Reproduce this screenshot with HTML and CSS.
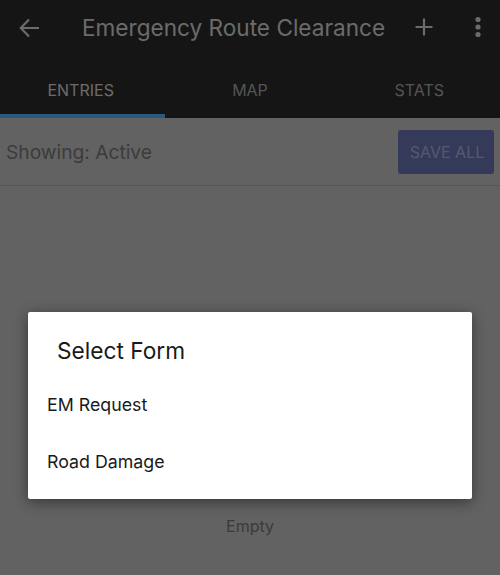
FILE: index.html
```html
<!DOCTYPE html>
<html>
<head>
<meta charset="utf-8">
<link rel="stylesheet" href="styles.css">
</head>
<body>
<div class="screen">
  <header class="appbar">
    <svg class="icon back" width="24" height="24" viewBox="0 0 24 24"><path d="M21 12H3M11 3.5L2.8 12 11 20.5" fill="none" stroke="currentColor" stroke-width="2.2"/></svg>
    <div class="title">Emergency Route Clearance</div>
    <svg class="icon plus" width="20" height="20" viewBox="0 0 20 20"><path d="M10 1.5V18.5M1.5 10H18.5" fill="none" stroke="currentColor" stroke-width="2.2"/></svg>
    <svg class="icon more" width="8" height="22" viewBox="0 0 8 22"><circle cx="4" cy="3.5" r="2.6" fill="currentColor"/><circle cx="4" cy="11" r="2.6" fill="currentColor"/><circle cx="4" cy="18.5" r="2.6" fill="currentColor"/></svg>
  </header>
  <nav class="tabs">
    <div class="tab active">ENTRIES</div>
    <div class="tab">MAP</div>
    <div class="tab">STATS</div>
  </nav>
  <div class="toolbar">
    <span class="showing">Showing: Active</span>
    <button class="save">SAVE ALL</button>
  </div>
  <main class="content">
    <div class="empty">Empty</div>
  </main>
  <div class="overlay">
    <div class="dialog">
      <div class="dialog-title">Select Form</div>
      <div class="option">EM Request</div>
      <div class="option">Road Damage</div>
    </div>
  </div>
</div>
</body>
</html>
```

FILE: styles.css
```css
* { box-sizing: border-box; }
html, body { margin: 0; padding: 0; }
body {
  font-family: Inter, Roboto, "Noto Sans", sans-serif;
  background: #c4c4c4;
}
.screen {
  position: relative;
  width: 500px;
  height: 575px;
  overflow: hidden;
  display: flex;
  flex-direction: column;
  background: #c4c4c4;
}
.appbar {
  height: 57px;
  background: #2a2a2a;
  color: #d6d6d6;
  display: flex;
  align-items: center;
  padding-left: 18px;
}
.icon { display: block; flex: none; }
.back { margin-top: -2px; }
.title {
  margin-left: 40px;
  font-size: 22.6px;
  flex: 1;
  margin-top: -3px;
}
.plus { margin-right: 40px; margin-top: -3px; }
.more { margin-right: 18px; margin-top: -3px; }
.tabs {
  height: 61px;
  background: #2a2a2a;
  display: flex;
  margin: 0 -4px;
  overflow: hidden;
}
.tab {
  flex: 1;
  display: flex;
  align-items: center;
  justify-content: center;
  font-size: 16px;
  color: #a8a8a8;
  padding-top: 5px;
  position: relative;
}
.tab.active { color: #d6d6d6; }
.tab.active::after {
  content: "";
  position: absolute;
  left: 4px;
  right: 0;
  bottom: 0;
  height: 4px;
  background: #5cb2fc;
}
.toolbar {
  height: 68px;
  display: flex;
  align-items: center;
  justify-content: space-between;
  padding: 0 6px;
  border-bottom: 1px solid #aeaeae;
}
.showing {
  font-size: 19.2px;
  color: #787878;
}
.save {
  width: 96px;
  height: 44px;
  border: none;
  border-radius: 3px;
  background: #6c74b4;
  color: #aab2d4;
  font-family: inherit;
  font-size: 16px;
  padding: 0 0 0 2px;
}
.content {
  flex: 1;
  display: flex;
  justify-content: center;
  padding-top: 330px;
}
.empty {
  font-size: 16px;
  color: #757575;
}
.overlay {
  position: absolute;
  inset: 0;
  background: rgba(0, 0, 0, 0.5);
  display: flex;
  justify-content: center;
  align-items: flex-start;
  padding-top: 312px;
}
.dialog {
  width: 444px;
  height: 187px;
  background: #ffffff;
  border-radius: 2px;
  box-shadow: 0 3px 14px rgba(0, 0, 0, 0.45);
  padding-top: 25px;
}
.dialog-title {
  font-size: 22.7px;
  line-height: 28px;
  color: #1a1a1a;
  padding-left: 29px;
  margin-bottom: 11px;
}
.option {
  height: 57px;
  display: flex;
  align-items: center;
  padding-left: 19px;
  font-size: 17.8px;
  color: #1a1a1a;
}
```
